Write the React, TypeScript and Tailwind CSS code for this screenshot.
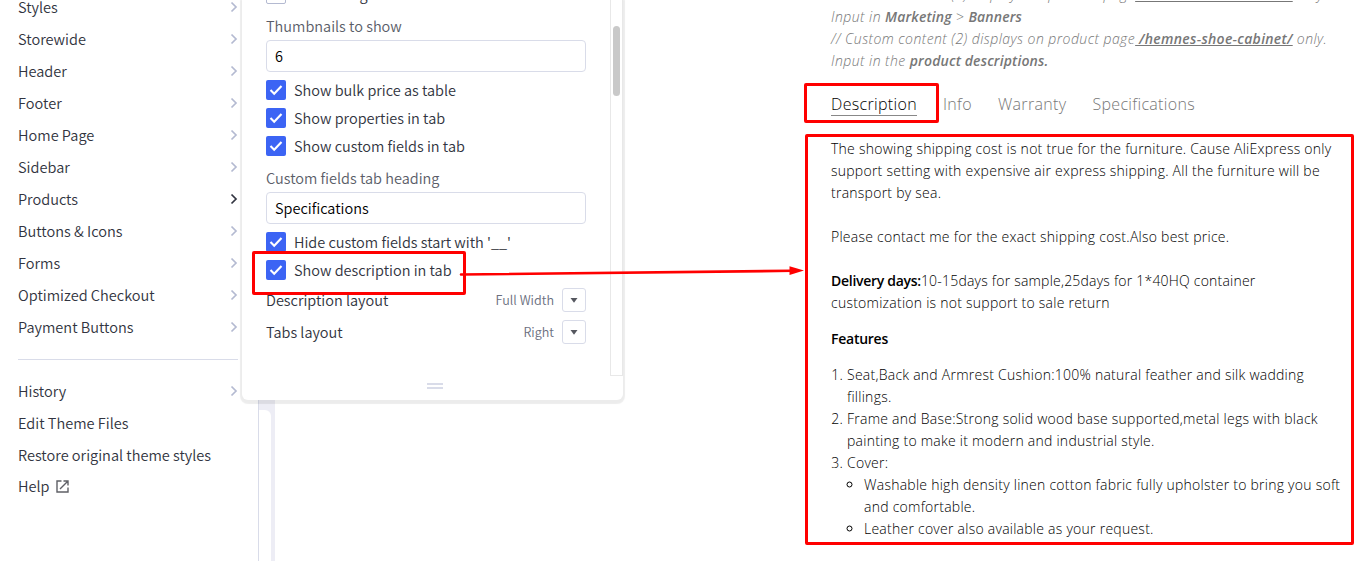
import React from "react";

const sans = "font-['Noto_Sans_CJK_SC',sans-serif] font-[350]";

const menu = ["Styles", "Storewide", "Header", "Footer", "Home Page", "Sidebar", "Products", "Buttons & Icons", "Forms", "Optimized Checkout", "Payment Buttons"];

function Chevron({ active = false }: { active?: boolean }) {
  return (
    <svg width="8" height="12" viewBox="0 0 8 12" className={active ? "text-[#313440]" : "text-[#b4bad1]"}>
      <path d="M1.5 1.5 L6 6 L1.5 10.5" fill="none" stroke="currentColor" strokeWidth="1.7" />
    </svg>
  );
}

function MenuRow({ label, chevron = true, active = false }: { label: string; chevron?: boolean; active?: boolean }) {
  return (
    <li className="flex h-8 items-center justify-between">
      <span>{label}</span>
      {chevron && <Chevron active={active} />}
    </li>
  );
}

function Check({ label, checked = true }: { label: string; checked?: boolean }) {
  return (
    <label className="flex h-7 items-center gap-2">
      {checked ? (
        <span className="flex size-5 items-center justify-center rounded-[2px] bg-[#3c64f4]">
          <svg width="14" height="12" viewBox="0 0 14 12">
            <path d="M1.5 6 L5.2 9.7 L12.5 2" fill="none" stroke="white" strokeWidth="2.1" />
          </svg>
        </span>
      ) : (
        <span className="size-5 rounded-[2px] border border-[#b4bad1]" />
      )}
      <span>{label}</span>
    </label>
  );
}

function Field({ value }: { value: string }) {
  return <div className="flex h-8 items-center rounded border border-[#d9dce9] px-2 text-black">{value}</div>;
}

function SelectRow({ label, value }: { label: string; value: string }) {
  return (
    <div className="flex h-8 items-center">
      <span className="grow">{label}</span>
      <span className="mr-2 text-[12.6px] text-[#6b6f80]">{value}</span>
      <span className="flex size-6 items-center justify-center rounded-[3px] border border-[#d9dce9]">
        <svg width="8" height="5" viewBox="0 0 8 5"><path d="M0.5 0h7L4 4.8z" fill="#55575f" /></svg>
      </span>
    </div>
  );
}

export default function App() {
  return (
    <div className="relative flex h-[561px] w-[1359px] overflow-hidden bg-white">
      <aside className={`${sans} w-[242px] shrink-0 pr-1 pl-[18px] text-[14.55px] text-[#313440]`}>
        <ul className="-mt-[9px]">
          {menu.map((m) => <MenuRow key={m} label={m} active={m === "Products"} />)}
        </ul>
        <hr className="mt-4 mb-[15px] border-[#d9dce9]" />
        <ul>
          <MenuRow label="History" />
          <MenuRow label="Edit Theme Files" chevron={false} />
          <MenuRow label="Restore original theme styles" chevron={false} />
          <li className="flex h-[30px] items-center gap-[6px]">
            <span>Help</span>
            <svg width="13" height="13" viewBox="0 0 13 13" fill="none" stroke="#5f6066" strokeWidth="1.4">
              <path d="M5.5 1H1V12H12V7.5M7.5 1H12V5.5M12 1L4 9" />
            </svg>
          </li>
        </ul>
      </aside>

      <div className="flex w-[382px] shrink-0 flex-col">
        <section className={`${sans} z-10 flex h-[400px] w-[381px] shrink-0 flex-col rounded-b-[6px] bg-white text-[14.5px] text-[#313440] shadow-[0_2px_1px_2px_rgba(0,0,0,0.075)]`}>
          <div className="flex h-[376px]">
            <div className="w-[344px] pl-6">
              <div className="-mt-5"><Check label="Hide rating" checked={false} /></div>
              <div className="mt-[5px] mb-[2px] flex h-[25px] items-center text-[#5a5d68]">Thumbnails to show</div>
              <Field value="6" />
              <div className="pt-1"><Check label="Show bulk price as table" /><Check label="Show properties in tab" /><Check label="Show custom fields in tab" /></div>
              <div className="mt-[5px] mb-px flex h-[26px] items-center text-[#5a5d68]">Custom fields tab heading</div>
              <Field value="Specifications" />
              <div className="pt-1"><Check label="Hide custom fields start with '__'" /><Check label="Show description in tab" /></div>
              <SelectRow label="Description layout" value="Full Width" />
              <SelectRow label="Tabs layout" value="Right" />
            </div>
            <div className="ml-6 w-[13px] border-x border-b border-[#e8e8e8] pt-[26px]">
              <div className="ml-[2px] h-[70px] w-[7px] rounded-full bg-[#c9c9c9]" />
            </div>
          </div>
          <div className="mt-[7px] ml-[185px] flex flex-col gap-[2px]">
            <span className="h-[2px] w-4 bg-[#d9dce9]" />
            <span className="h-[2px] w-4 bg-[#d9dce9]" />
          </div>
        </section>
        <div className="ml-4 flex w-[17px] grow border-l border-[#d9dce9] bg-[#ededf5]">
          <div className="mt-[10px] w-3 rounded-tr-md bg-white" />
        </div>
      </div>

      <main className="ml-[207px] w-[528px] shrink-0 font-['Open_Sans',sans-serif] text-sm leading-[22px] font-light tracking-[0.25px] whitespace-nowrap text-black">
        <p className="-mt-4 tracking-[0.45px] text-[#777] italic">
          // Custom content (1) displays on product page<b className="font-semibold tracking-[0.3px] underline"> /hemnes-shoe-cabinet/</b> only.<br />
          Input in <b className="font-semibold tracking-[0.15px]">Marketing</b> &gt; <b className="font-semibold tracking-[0.15px]">Banners</b><br />
          // Custom content (2) displays on product page<b className="font-semibold tracking-[0.3px] underline"> /hemnes-shoe-cabinet/</b> only.<br />
          Input in the <b className="font-semibold tracking-[0.15px]">product descriptions.</b>
        </p>
        <nav className="mt-5 flex h-[24px] gap-[26px] text-base leading-6 tracking-[0.33px] text-[#777]">
          <span className="border-b border-[#888] text-black">Description</span>
          <span>Info</span><span>Warranty</span><span>Specifications</span>
        </nav>
        <div className="pt-[22px]">
          <p>The showing shipping cost is not true for the furniture. Cause AliExpress only<br />support setting with expensive air express shipping. All the furniture will be<br />transport by sea.</p>
          <p className="mt-[22px]">Please contact me for the exact shipping cost.Also best price.</p>
          <p className="mt-[22px]"><b className="font-semibold tracking-[-0.28px]">Delivery days:</b><span className="tracking-[0.21px]">10-15days for sample,25days for 1*40HQ container</span><br />customization is not support to sale return</p>
          <p className="mt-[14px] font-semibold tracking-[-0.25px]">Features</p>
          <ol className="mt-[14px] list-decimal pl-4">
            <li>Seat,Back and Armrest Cushion:100% natural feather and silk wadding<br />fillings.</li>
            <li>Frame and Base:Strong solid wood base supported,metal legs with black<br />painting to make it modern and industrial style.</li>
            <li>Cover:
              <ul className="list-[circle] pl-[17px]">
                <li>Washable high density linen cotton fabric fully upholster to bring you soft<br />and comfortable.</li>
                <li>Leather cover also available as your request.</li>
              </ul>
            </li>
          </ol>
        </div>
      </main>

      <div className="absolute top-[251px] left-[252px] z-20 h-11 w-[214px] rounded-[2px] border-3 border-[#f00]" />
      <div className="absolute top-[83px] left-[804px] z-20 h-10 w-[135px] rounded-[2px] border-3 border-[#f00]" />
      <div className="absolute top-[134px] left-[805px] z-20 h-[411px] w-[549px] rounded-[2px] border-3 border-[#f00]" />
      <svg className="absolute top-[262px] left-[458px] z-20" width="350" height="18" viewBox="0 0 350 18">
        <path d="M3 12.5 L334 8.8" stroke="#f00" strokeWidth="2.6" strokeLinecap="round" />
        <path d="M331.5 4.2 L346 8.6 L331.5 13z" fill="#f00" />
      </svg>
    </div>
  );
}
